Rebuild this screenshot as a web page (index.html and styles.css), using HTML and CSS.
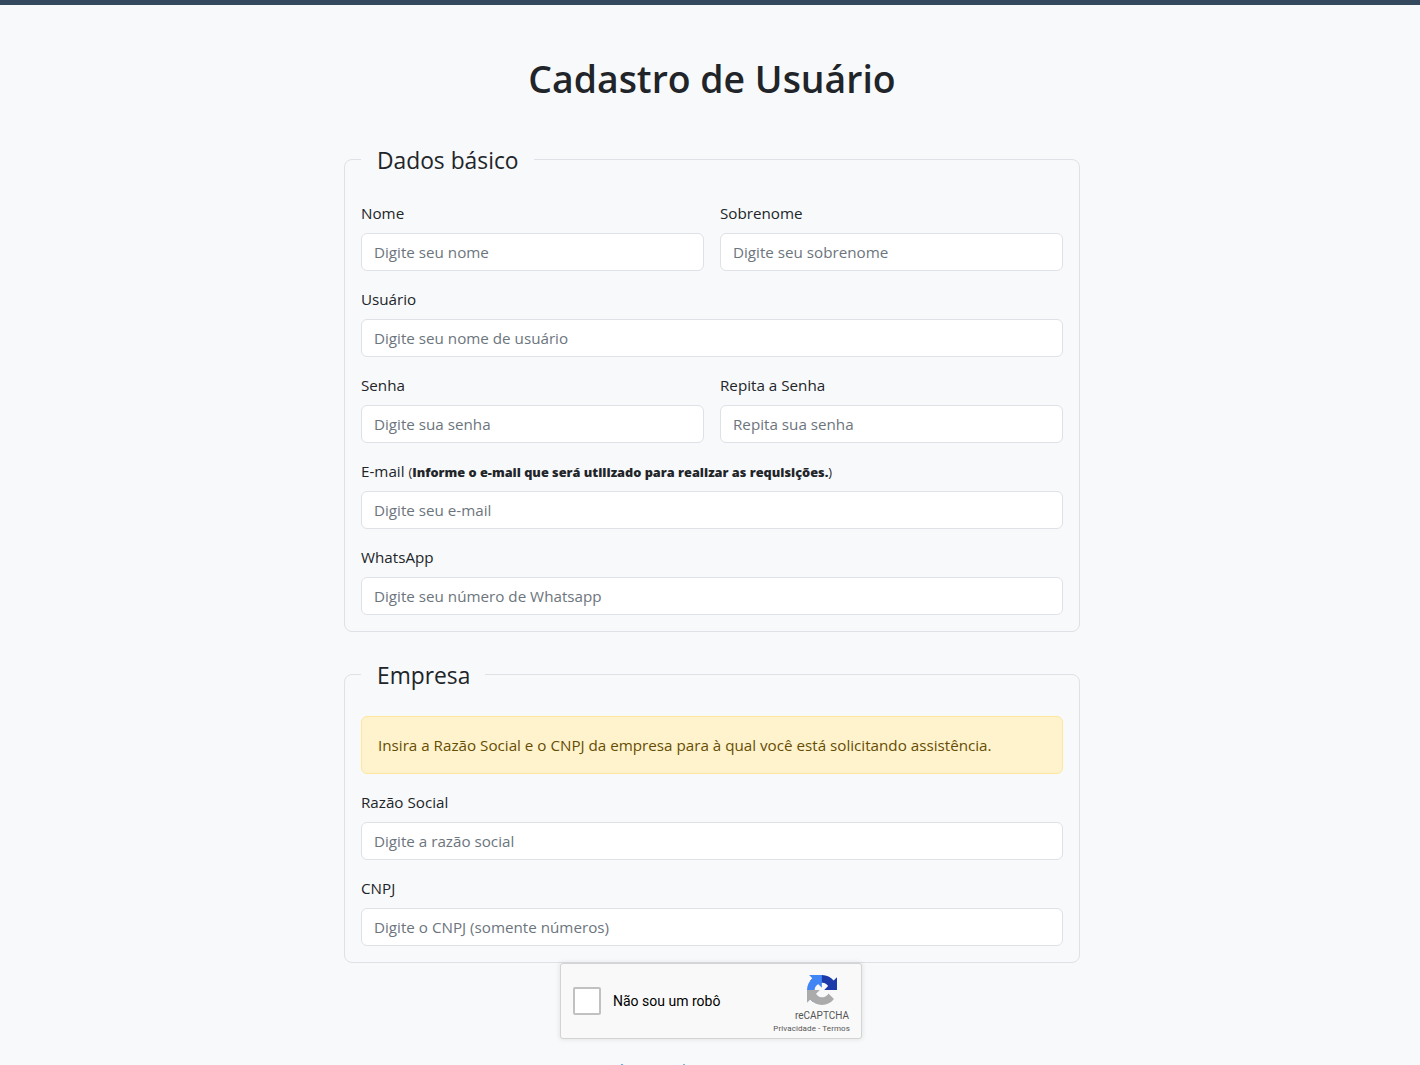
FILE: index.html
```html
<!DOCTYPE html>
<html lang="pt-BR">
<head>
    <meta charset="UTF-8">
    <meta name="viewport" content="width=device-width, initial-scale=1.0">
    <title>Cadastro de Usuário</title>
    <link rel="stylesheet" href="styles.css">
</head>
<body>
    <main class="page">
        <h1 class="title">Cadastro de Usuário</h1>
        <form class="form">
            <fieldset class="group">
                <legend class="group-title">Dados básico</legend>
                <div class="row">
                    <div class="field">
                        <label class="label" for="nome">Nome</label>
                        <input class="input" id="nome" type="text" placeholder="Digite seu nome">
                    </div>
                    <div class="field">
                        <label class="label" for="sobrenome">Sobrenome</label>
                        <input class="input" id="sobrenome" type="text" placeholder="Digite seu sobrenome">
                    </div>
                </div>
                <div class="field">
                    <label class="label" for="usuario">Usuário</label>
                    <input class="input" id="usuario" type="text" placeholder="Digite seu nome de usuário">
                </div>
                <div class="row">
                    <div class="field">
                        <label class="label" for="senha">Senha</label>
                        <input class="input" id="senha" type="password" placeholder="Digite sua senha">
                    </div>
                    <div class="field">
                        <label class="label" for="senha2">Repita a Senha</label>
                        <input class="input" id="senha2" type="password" placeholder="Repita sua senha">
                    </div>
                </div>
                <div class="field">
                    <label class="label" for="email">E-mail <small class="hint">(<b class="hint-strong">Informe o e-mail que será utilizado para realizar as requisições.</b>)</small></label>
                    <input class="input" id="email" type="email" placeholder="Digite seu e-mail">
                </div>
                <div class="field">
                    <label class="label" for="whatsapp">WhatsApp</label>
                    <input class="input" id="whatsapp" type="text" placeholder="Digite seu número de Whatsapp">
                </div>
            </fieldset>

            <fieldset class="group">
                <legend class="group-title">Empresa</legend>
                <div class="alert">Insira a Razão Social e o CNPJ da empresa para à qual você está solicitando assistência.</div>
                <div class="field">
                    <label class="label" for="razao">Razão Social</label>
                    <input class="input" id="razao" type="text" placeholder="Digite a razão social">
                </div>
                <div class="field">
                    <label class="label" for="cnpj">CNPJ</label>
                    <input class="input" id="cnpj" type="text" placeholder="Digite o CNPJ (somente números)">
                </div>
            </fieldset>

            <div class="captcha">
                <span class="captcha-box"></span>
                <span class="captcha-text">Não sou um robô</span>
                <div class="captcha-brand">
                    <svg class="captcha-logo" viewBox="0 0 64 64" width="30" height="30">
                        <path fill="#1c3aa9" d="M64 31.955l-.033-1.37V4.687l-7.16 7.16C50.948 4.674 42.033.093 32.05.093c-10.4 0-19.622 4.96-25.458 12.64l11.736 11.86a15.55 15.55 0 0 1 4.754-5.334c2.05-1.6 4.952-2.906 8.968-2.906.485 0 .86.057 1.135.163 4.976.393 9.288 3.14 11.828 7.124l-8.307 8.307c10.522-.04 22.4-.067 27.295.005"/>
                        <path fill="#4285f4" d="M31.862.094l-1.37.033H4.594l7.16 7.16C4.58 13.147 0 22.06 0 32.046c0 10.4 4.96 19.622 12.64 25.458l11.86-11.736a15.55 15.55 0 0 1-5.334-4.754c-1.6-2.05-2.906-4.952-2.906-8.968 0-.485.057-.86.163-1.135.393-4.976 3.14-9.288 7.124-11.828l8.307 8.307C31.814 17.868 31.79 5 31.862.094"/>
                        <path fill="#ababab" d="M.001 32.045l.033 1.37v25.898l7.16-7.16c5.86 7.173 14.774 11.754 24.76 11.754 10.4 0 19.622-4.96 25.458-12.64L45.676 39.41a15.55 15.55 0 0 1-4.754 5.334c-2.05 1.6-4.952 2.906-8.968 2.906-.485 0-.86-.057-1.135-.163-4.976-.393-9.288-3.14-11.828-7.124l8.307-8.307c-10.522.04-22.4.067-27.295-.005"/>
                    </svg>
                    <span class="captcha-name">reCAPTCHA</span>
                    <span class="captcha-links">Privacidade - Termos</span>
                </div>
            </div>
            <p class="login"><a class="login-link" href="#">Já tem cadastro? Entrar aqui</a></p>
        </form>
    </main>
</body>
</html>
```

FILE: styles.css
```css
* {
    box-sizing: border-box;
}
body {
    margin: 0;
    background-color: #f8f9fa;
    border-top: 5px solid #34495e;
    color: #212529;
    font-family: "Open Sans", "Noto Sans", sans-serif;
    font-size: 15.2px;
    line-height: 24px;
}
.page {
    width: 736px;
    margin-left: 344px;
}
.title {
    margin: 50px 0 38px;
    font-size: 37.4px;
    font-weight: 600;
    line-height: 48px;
    text-align: center;
}
.form {
    margin: 0;
}
.group {
    min-width: 0;
    margin: 0 0 24px;
    padding: 24px 16px 16px;
    border: 1px solid #dee2e6;
    border-radius: 8px;
}
.group:last-of-type {
    margin-bottom: 0;
}
.group-title {
    padding: 4px 15px 0 16px;
    font-size: 22.8px;
    line-height: 32px;
}
.row {
    display: flex;
    gap: 16px;
}
.row .field {
    flex: 1;
}
.field {
    margin-bottom: 16px;
}
.group > .field:last-child {
    margin-bottom: 0;
}
.label {
    display: block;
    margin-bottom: 8px;
}
.hint {
    font-size: 12.75px;
    line-height: 1;
}
.hint-strong {
    font-weight: 800;
}
.input {
    display: block;
    width: 100%;
    height: 38px;
    padding: 6px 12px;
    background: #fff;
    border: 1px solid #dee2e6;
    border-radius: 6px;
    color: #212529;
    font: inherit;
}
.input::placeholder {
    color: #6c757d;
    opacity: 1;
}
.alert {
    margin-bottom: 16px;
    padding: 16px;
    background-color: #fff3cd;
    border: 1px solid #ffe69c;
    border-radius: 6px;
    color: #664d03;
}
.captcha {
    display: flex;
    align-items: center;
    width: 302px;
    height: 76px;
    margin-left: 216px;
    background: #f9f9f9;
    border: 1px solid #d3d3d3;
    border-radius: 3px;
    box-shadow: 0 0 4px 1px rgba(0, 0, 0, 0.08);
    font-family: Roboto, sans-serif;
    color: #000;
}
.captcha-box {
    width: 28px;
    height: 28px;
    margin-left: 12px;
    background: #fff;
    border: 2px solid #c1c1c1;
    border-radius: 2px;
}
.captcha-text {
    margin-left: 12px;
    font-size: 14px;
}
.captcha-brand {
    display: flex;
    flex-direction: column;
    align-items: flex-end;
    margin: 8px 11px 0 auto;
    color: #555;
}
.captcha-logo {
    margin: 0 13px 4px 0;
}
.captcha-name {
    margin-right: 1px;
    font-size: 10px;
    line-height: 13px;
}
.captcha-links {
    font-size: 8px;
    line-height: 13px;
    letter-spacing: 0.1px;
}
.login {
    margin: 18px 0 0;
    text-align: center;
}
.login-link {
    color: #3498db;
    text-decoration: none;
}
```
